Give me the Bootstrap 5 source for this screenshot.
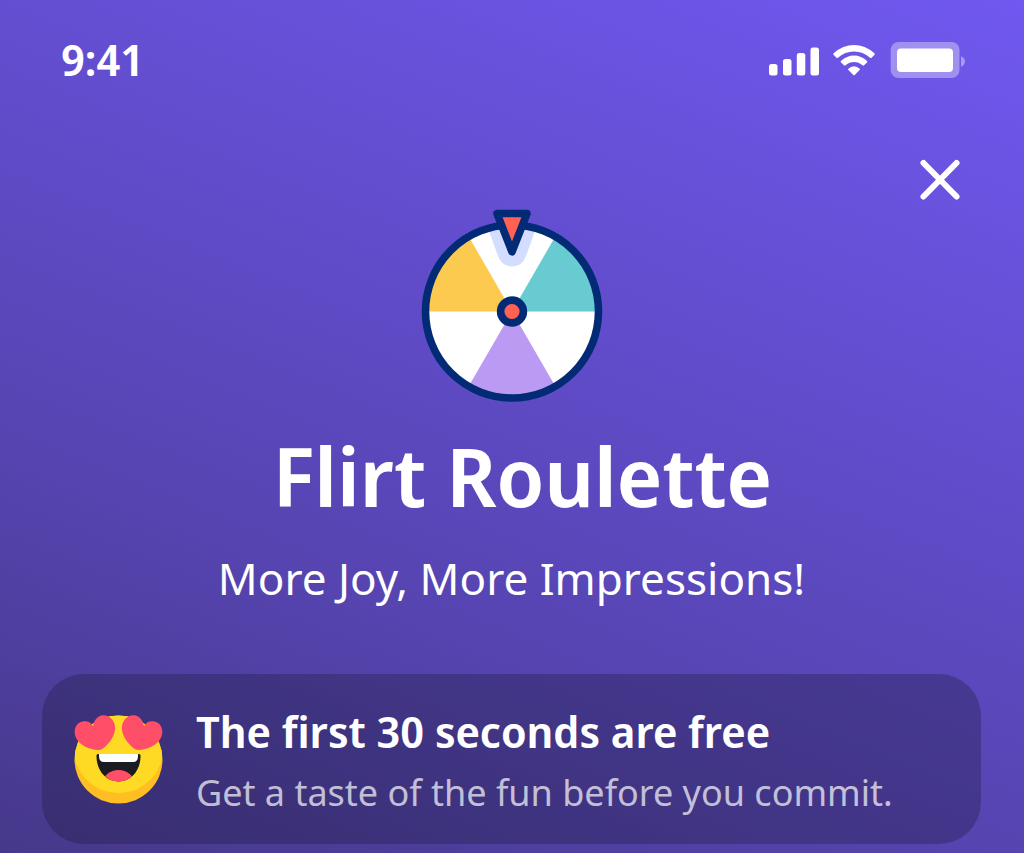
<!DOCTYPE html>
<html lang="en">
<head>
<meta charset="utf-8">
<meta name="viewport" content="width=device-width, initial-scale=1">
<title>Flirt Roulette</title>
<link rel="stylesheet" href="https://cdn.jsdelivr.net/npm/bootstrap@5.3.0/dist/css/bootstrap.min.css">
<style>
  body {
    font-family: "Noto Sans", sans-serif;
    background: linear-gradient(202deg, #7058f0 0%, #5644b0 68%, #46388a 100%) no-repeat;
  }
  svg { display: block; flex: none; }
  .clock, .hero-title, .offer-title { font-family: "Noto Sans Display", "Noto Sans", sans-serif; }
  .status-bar { padding: 29px 59px 0 61px; }
  .clock { font-size: 44px; line-height: 60px; }
  .close-row { padding: 65px 58px 0 0; }
  .close-button { line-height: 0; }
  .hero { padding: 2px 43px 0 42px; }
  .hero-title { font-size: 82px; line-height: 100px; margin-top: 21px; padding-left: 22px; }
  .hero-text { font-size: 44px; line-height: 60px; margin-top: 23px; }
  .offer { margin: 66px 43px 9px 42px; padding: 26px 32px; gap: 33px; border-radius: 42px; background: rgba(23, 23, 51, .3); }
  .offer-title { font-size: 44px; line-height: 62px; }
  .offer-text { font-size: 36px; line-height: 50px; margin-top: 6px; color: rgba(255, 255, 255, .7); }
</style>
</head>
<body class="min-vh-100 text-white">
  <header class="status-bar d-flex align-items-center justify-content-between">
    <time class="clock fw-semibold">9:41</time>
    <svg width="196" height="38" viewBox="0 -1 196 38" fill="#fff" role="img" aria-label="Signal, Wi-Fi and battery">
      <rect x="0" y="23" width="8.500" height="11.500" rx="2.500"/>
      <rect x="14" y="18" width="8.500" height="16.500" rx="2.500"/>
      <rect x="27.800" y="12" width="8.500" height="22.500" rx="2.500"/>
      <rect x="41.500" y="6.500" width="8.500" height="28" rx="2.500"/>
      <path d="M64.600 12.200Q74 4 85 4T105.400 12.200Q106.200 13 105.500 13.800L102.600 16.700Q101.800 17.400 101 16.700Q94 10.400 85 10.400T69 16.700Q68.200 17.400 67.400 16.700L64.500 13.800Q63.800 13 64.600 12.200Z"/>
      <path d="M72 20Q77.800 14.500 85 14.500T98 20Q98.800 20.800 98 21.500L95.100 24.200Q94.300 25 93.500 24.300Q89.800 20.900 85 20.900T76.500 24.300Q75.700 25 74.900 24.200L72 21.500Q71.200 20.800 72 20Z"/>
      <path d="M79.300 27.700Q81.800 25.200 85 25.200T90.700 27.700Q91.200 28.300 90.600 29L85.700 34Q85 34.600 84.300 34L79.400 29Q78.800 28.300 79.300 27.700Z"/>
      <rect x="121.700" y="1" width="68.800" height="36" rx="8" fill-opacity=".35"/>
      <rect x="128" y="7.500" width="56" height="23.500" rx="4"/>
      <path d="M192 15.300Q196 16.800 196 20.300T192 25.800Z" fill-opacity=".4"/>
    </svg>
  </header>
  <div class="close-row d-flex justify-content-end">
    <button type="button" class="close-button btn p-0 border-0" aria-label="Close">
      <svg width="52" height="52" viewBox="0 0 52 52" fill="none" stroke="#fff" stroke-width="6" stroke-linecap="round"><path d="M9.500 9L42.500 42.500M42.500 9L9.500 42.500"/></svg>
    </button>
  </div>
  <main>
    <section class="hero d-flex flex-column align-items-center text-center">
      <svg width="182" height="196" viewBox="0 .5 182 196" role="img" aria-label="Roulette wheel">
        <defs><clipPath id="disc"><circle cx="91" cy="104" r="84"/></clipPath></defs>
        <circle cx="91" cy="104" r="86" fill="#fff"/>
        <g clip-path="url(#disc)">
          <path d="M91 104H0V30L43.100 21Z" fill="#fdca50"/>
          <path d="M91 104H182V30L138.900 21Z" fill="#67cbd1"/>
          <path d="M91 104L40 192H142Z" fill="#bb9af3"/>
          <path d="M66 18L77 48.500Q81 59 91 59T105 48.500L116 18Z" fill="#d2ddff"/>
        </g>
        <circle cx="91" cy="104" r="86.500" fill="none" stroke="#032b75" stroke-width="7.600"/>
        <path d="M76 6H106L91 44.300Z" fill="#ff6152" stroke="#032b75" stroke-width="7.600" stroke-linejoin="round"/>
        <circle cx="91" cy="104" r="11.400" fill="#ff6152" stroke="#032b75" stroke-width="7.600"/>
      </svg>
      <h1 class="hero-title fw-semibold mb-0">Flirt Roulette</h1>
      <p class="hero-text mb-0">More Joy, More Impressions!</p>
    </section>
    <section class="offer d-flex align-items-center">
      <svg width="89" height="89" viewBox="0 0 89 89" role="img" aria-label="Smiling face with heart eyes">
        <defs>
          <clipPath id="face"><circle cx="44.500" cy="44.500" r="44"/></clipPath>
          <clipPath id="mouth"><path d="M22.500 40.500Q22.500 39 24 39H65Q66.500 39 66.500 40.500C67 54 58 66.500 44.500 66.500S22 54 22.500 40.500Z"/></clipPath>
          <path id="heart" d="M24 35C16 34.500 7 31 3 24.500C-2 16.500 1.500 8 8.500 6.500C13 5.500 17.500 7.500 19 11.200C20 5 24 .5 29 .3C36.500 0 42 7 41 15C40 23 33 31 28 34.200Q26 35.200 24 35Z"/>
        </defs>
        <circle cx="44.500" cy="44.500" r="44" fill="#ffbf24"/>
        <ellipse cx="44.500" cy="34" rx="44.500" ry="44" fill="#ffda24" clip-path="url(#face)"/>
        <g clip-path="url(#mouth)">
          <path d="M20 37H69V69H20Z" fill="#1a1c22"/>
          <ellipse cx="44.500" cy="68" rx="15.500" ry="13" fill="#ff4f68"/>
          <path d="M25 38H64V41Q64 47 59 47H30Q25 47 25 41Z" fill="#fff"/>
        </g>
        <use href="#heart" fill="#ff4f68"/>
        <use href="#heart" fill="#ff4f68" transform="matrix(-1 0 0 1 89 0)"/>
      </svg>
      <div>
        <h2 class="offer-title fw-semibold mb-0">The first 30 seconds are free</h2>
        <p class="offer-text mb-0">Get a taste of the fun before you commit.</p>
      </div>
    </section>
  </main>
<script src="https://cdn.jsdelivr.net/npm/bootstrap@5.3.0/dist/js/bootstrap.bundle.min.js"></script>
</body>
</html>
